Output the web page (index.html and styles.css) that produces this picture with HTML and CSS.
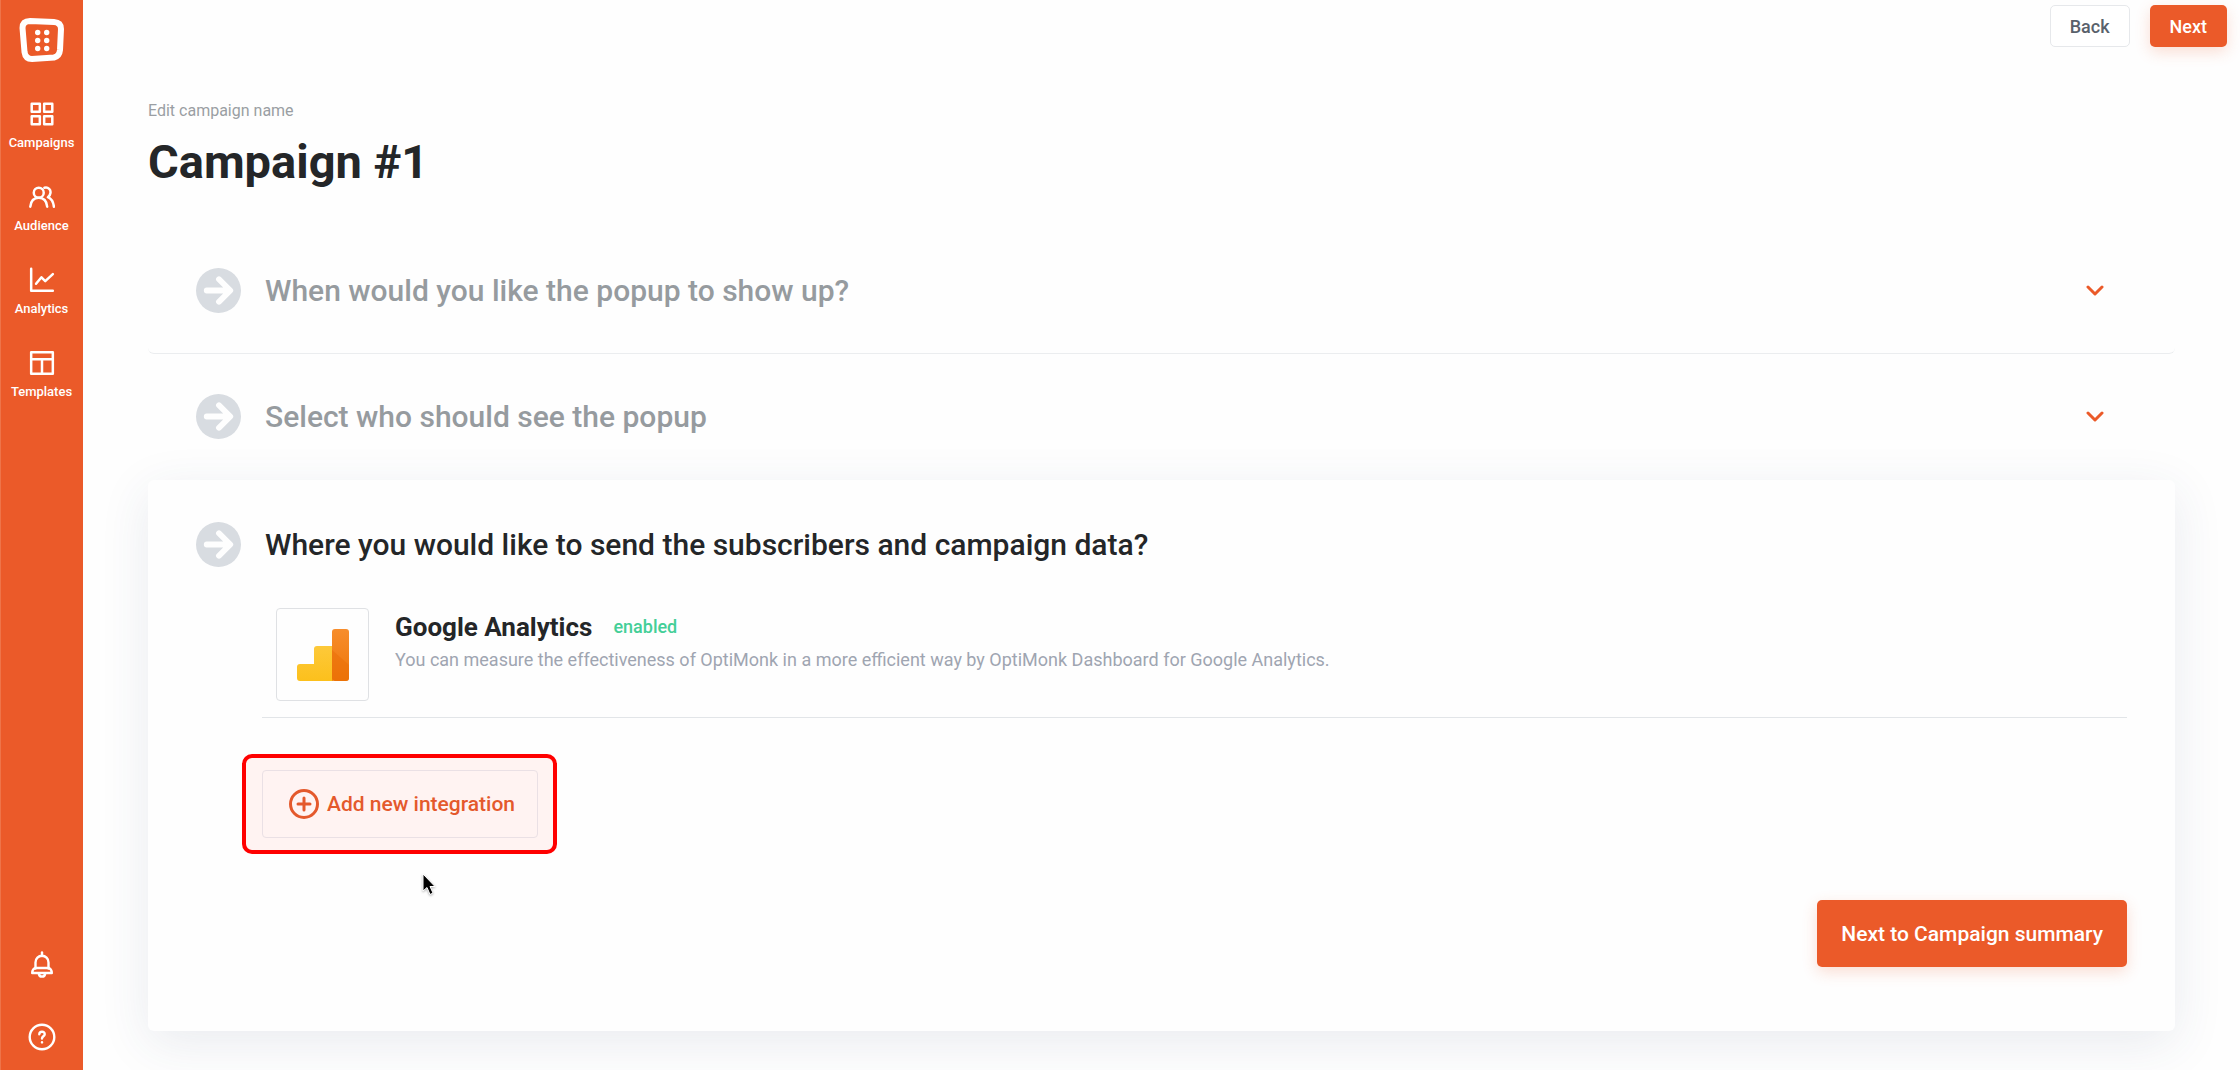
FILE: index.html
```html
<!DOCTYPE html>
<html lang="en">
<head>
    <meta charset="UTF-8">
    <meta name="viewport" content="width=device-width, initial-scale=1.0">
    <title>Campaign #1</title>
    <link rel="stylesheet" href="styles.css">
</head>
<body>

    <!-- Sidebar -->
    <nav class="sidebar">
        <a href="#" class="logo" aria-label="Home">
            <svg width="46" height="46" viewBox="0 0 46 46">
                <path d="M11 4 L35 5 Q42 5.500 42 12 L41 33 Q40.500 39 35 40.500 L13 42 Q6.500 42 5.500 35 L3.500 11 Q3.500 4 11 4Z" fill="none" stroke="#fff" stroke-width="6"/>
                <g fill="#fff">
                    <circle cx="18.700" cy="15.500" r="2.700"/>
                    <circle cx="27.700" cy="15.500" r="2.700"/>
                    <circle cx="18.700" cy="23.500" r="2.700"/>
                    <circle cx="27.700" cy="23.500" r="2.700"/>
                    <circle cx="18.700" cy="31.500" r="2.700"/>
                    <circle cx="27.700" cy="31.500" r="2.700"/>
                </g>
            </svg>
        </a>

        <a href="#" class="nav-item">
            <svg class="nav-icon" viewBox="0 0 24 24">
                <rect x="2.500" y="2.500" width="7.500" height="7.500"/>
                <rect x="14" y="2.500" width="7.500" height="7.500"/>
                <rect x="2.500" y="14" width="7.500" height="7.500"/>
                <rect x="14" y="14" width="7.500" height="7.500"/>
            </svg>
            <span>Campaigns</span>
        </a>
        <a href="#" class="nav-item">
            <svg class="nav-icon" viewBox="0 0 24 24">
                <circle cx="9" cy="8" r="4.600"/>
                <path d="M1.200 21 C1.700 16 4.500 12.800 9 12.800 S16.300 16 16.800 21"/>
                <path d="M14.200 3.500 C18 2.600 20.300 5.300 19.800 8.300 C19.600 10 18.700 11.300 17.500 12.200 C20.500 13.500 22.500 17 23 21"/>
            </svg>
            <span>Audience</span>
        </a>
        <a href="#" class="nav-item">
            <svg class="nav-icon" viewBox="0 0 24 24">
                <path d="M2 1.500 V22 H22"/>
                <path d="M6.500 15.500 L11.500 9.500 L15 13 L22 6.500"/>
            </svg>
            <span>Analytics</span>
        </a>
        <a href="#" class="nav-item">
            <svg class="nav-icon" viewBox="0 0 24 24">
                <rect x="2" y="2" width="20" height="20"/>
                <path d="M2 8.500 H22 M12 8.500 V22"/>
            </svg>
            <span>Templates</span>
        </a>

        <div class="sidebar-bottom">
            <button class="icon-btn" aria-label="Notifications">
                <svg width="28" height="28" viewBox="0 0 28 28" class="stroke-white">
                    <path d="M7.500 17.500 V11.500 C7.500 7.500 10.500 4.800 14 4.800 S20.500 7.500 20.500 11.500 V17.500"/>
                    <path d="M14 1.500 V5"/>
                    <path d="M7 17 H21 Q23.800 18.500 23.800 22 H4.200 Q4.200 18.500 7 17Z"/>
                    <path d="M10.800 22.500 C11.300 26.700 16.700 26.700 17.200 22.500"/>
                </svg>
            </button>
            <button class="icon-btn" aria-label="Help">
                <svg width="28" height="28" viewBox="0 0 28 28" class="stroke-white">
                    <circle cx="14" cy="14" r="12.300"/>
                    <path d="M11.300 11.200 C11.500 7.700 17 8 16.700 11.300 C16.500 13.300 14 13.300 14 15.500"/>
                    <path d="M14 19.200 V19.400"/>
                </svg>
            </button>
        </div>
    </nav>

    <div class="page">
        <header class="topbar">
            <button class="btn btn-light">Back</button>
            <button class="btn btn-primary">Next</button>
        </header>

        <main class="content">
            <label class="name-label" for="campaignName">Edit campaign name</label>
            <input class="name-input" type="text" id="campaignName" value="Campaign #1">

            <!-- Collapsed steps -->
            <section class="step">
                <h2>
                    <button class="step-header" aria-expanded="false">
                        <svg class="step-arrow" viewBox="0 0 46 46">
                            <circle cx="23" cy="23" r="23"/>
                            <path d="M11 23 H34 M23.500 11.500 L35 23 L23.500 34.500"/>
                        </svg>
                        <span class="step-title">When would you like the popup to show up?</span>
                        <svg class="chevron" viewBox="0 0 20 12"><path d="M3 2 L10 9 L17 2"/></svg>
                    </button>
                </h2>
            </section>
            <section class="step">
                <h2>
                    <button class="step-header" aria-expanded="false">
                        <svg class="step-arrow" viewBox="0 0 46 46">
                            <circle cx="23" cy="23" r="23"/>
                            <path d="M11 23 H34 M23.500 11.500 L35 23 L23.500 34.500"/>
                        </svg>
                        <span class="step-title">Select who should see the popup</span>
                        <svg class="chevron" viewBox="0 0 20 12"><path d="M3 2 L10 9 L17 2"/></svg>
                    </button>
                </h2>
            </section>

            <!-- Open step -->
            <section class="step step-open">
                <h2>
                    <button class="step-header" aria-expanded="true">
                        <svg class="step-arrow" viewBox="0 0 46 46">
                            <circle cx="23" cy="23" r="23"/>
                            <path d="M11 23 H34 M23.500 11.500 L35 23 L23.500 34.500"/>
                        </svg>
                        <span class="step-title">Where you would like to send the subscribers and campaign data?</span>
                    </button>
                </h2>

                <div class="step-body">
                    <div class="integration">
                        <div class="integration-logo">
                            <svg width="54" height="54" viewBox="0 0 54 54">
                                <defs>
                                    <linearGradient id="bars" x1="0" y1="0" x2="0" y2="1">
                                        <stop offset="0" stop-color="#fdc93a"/>
                                        <stop offset="1" stop-color="#fcc01c"/>
                                    </linearGradient>
                                    <linearGradient id="tall" x1="0" y1="0" x2="0" y2="1">
                                        <stop offset="0" stop-color="#f78d2c"/>
                                        <stop offset="1" stop-color="#ee7608"/>
                                    </linearGradient>
                                </defs>
                                <path d="M4 36 H18 V21 Q18 18 21 18 H37 V53 H4 Q1 53 1 50 V39 Q1 36 4 36Z" fill="url(#bars)"/>
                                <rect x="36" y="1" width="17" height="52" rx="3" fill="url(#tall)"/>
                                <path d="M36 22 L53 37 V50 Q53 53 50 53 H36Z" fill="#ea6d05" fill-opacity="0.500"/>
                            </svg>
                        </div>
                        <div class="integration-info">
                            <div class="integration-name">
                                <h3>Google Analytics</h3>
                                <span class="status">enabled</span>
                            </div>
                            <p>You can measure the effectiveness of OptiMonk in a more efficient way by OptiMonk Dashboard for Google Analytics.</p>
                        </div>
                    </div>

                    <div class="highlight">
                        <button class="btn-add">
                            <svg width="30" height="30" viewBox="0 0 30 30">
                                <circle cx="15" cy="15" r="13.500"/>
                                <path d="M15 9 V21 M9 15 H21"/>
                            </svg>
                            Add new integration
                        </button>
                        <svg class="cursor" width="16" height="24" viewBox="0 0 16 24">
                            <path d="M1 1 V18 L5 14.500 L8 21.500 L11 20 L8 13.500 H13Z"/>
                        </svg>
                    </div>
                </div>

                <div class="step-footer">
                    <button class="btn btn-primary btn-large">Next to Campaign summary</button>
                </div>
            </section>
        </main>
    </div>

</body>
</html>
```

FILE: styles.css
```css
* {
    box-sizing: border-box;
}

body {
    margin: 0;
    display: flex;
    min-height: 100vh;
    font-family: Roboto, Arial, sans-serif;
    color: #242628;
    background-color: #fefefe;
}

button, input {
    font-family: inherit;
}

button {
    cursor: pointer;
}

h2, h3, p {
    margin: 0;
}

/* Sidebar */
.sidebar {
    width: 83px;
    flex-shrink: 0;
    display: flex;
    flex-direction: column;
    align-items: center;
    padding: 17px 1px 19px 0;
    background-color: #eb5a29;
    border-left: 1px solid #ee7449;
}

.logo {
    height: 46px;
    margin-bottom: 38px;
}

.nav-item {
    display: flex;
    flex-direction: column;
    align-items: center;
    gap: 8px;
    height: 83px;
    color: white;
    font-size: 13px;
    font-weight: 500;
    line-height: 16px;
    text-decoration: none;
}

.nav-icon {
    width: 26px;
    height: 26px;
    fill: none;
    stroke: white;
    stroke-width: 2.3;
    stroke-linecap: round;
    stroke-linejoin: round;
}

.sidebar-bottom {
    display: flex;
    flex-direction: column;
    gap: 44px;
    margin-top: auto;
}

.icon-btn {
    height: 28px;
    padding: 0;
    border: none;
    background: none;
}

.stroke-white {
    fill: none;
    stroke: white;
    stroke-width: 2.4;
    stroke-linecap: round;
    stroke-linejoin: round;
}

/* Page */
.page {
    flex: 1;
    min-width: 0;
}

.topbar {
    display: flex;
    justify-content: flex-end;
    gap: 20px;
    padding: 5px 13px 0;
}

.btn {
    height: 42px;
    padding: 0 19px;
    border: 1px solid transparent;
    border-radius: 5px;
    font-size: 18px;
    font-weight: 500;
}

.btn-light {
    color: #59616b;
    background-color: white;
    border-color: #e6e8eb;
}

.btn-primary {
    color: white;
    background-color: #eb5a29;
    box-shadow: 0 5px 15px rgba(235, 90, 41, 0.2);
}

.btn-large {
    height: 67px;
    padding: 0 23px;
    font-size: 21px;
}

.content {
    padding: 54px 65px 38px;
}

.name-label {
    display: block;
    font-size: 16px;
    line-height: 20px;
    color: #9a9ea3;
}

.name-input {
    display: block;
    width: 100%;
    height: 60px;
    margin: 10px 0 37px;
    padding: 0;
    border: none;
    outline: none;
    background: none;
    font-size: 47px;
    font-weight: 700;
    color: #242628;
}

/* Steps */
.step {
    border-bottom: 1px solid #ebedef;
    border-radius: 6px;
}

.step:nth-of-type(2) {
    border-bottom-color: transparent;
}

.step-header {
    display: flex;
    align-items: center;
    width: 100%;
    height: 125px;
    padding: 0 70px 0 48px;
    border: none;
    background: none;
    text-align: left;
    font-size: 30px;
    font-weight: 500;
    color: #969b9f;
}

.step-arrow {
    width: 45px;
    height: 45px;
    margin-right: 24px;
    fill: #d8dce1;
}

.step-arrow path {
    fill: none;
    stroke: #fefefe;
    stroke-width: 6;
    stroke-linecap: round;
    stroke-linejoin: round;
}

.chevron {
    width: 20px;
    height: 12px;
    margin-left: auto;
    fill: none;
    stroke: #eb5a29;
    stroke-width: 3;
    stroke-linecap: round;
    stroke-linejoin: round;
}

.step-open {
    border: none;
    padding-bottom: 64px;
    background-color: #fefefe;
    box-shadow: 0 12px 50px rgba(50, 70, 110, 0.1);
}

.step-open .step-header {
    height: 128px;
    color: #242628;
}

.step-body {
    padding: 0 48px 0 114px;
}

.integration {
    display: flex;
    gap: 26px;
    padding: 0 14px 16px;
    border-bottom: 1px solid #e2e5e8;
}

.integration-logo {
    display: flex;
    align-items: center;
    justify-content: center;
    width: 93px;
    height: 93px;
    flex-shrink: 0;
    border: 1px solid #dfe1e4;
    border-radius: 4px;
}

.integration-name {
    display: flex;
    align-items: center;
    gap: 21px;
    margin-top: 3px;
    line-height: 32px;
}

.integration-name h3 {
    font-size: 26px;
    font-weight: 700;
}

.status {
    font-size: 18px;
    font-weight: 500;
    color: #44cf98;
}

.integration-info p {
    margin-top: 5px;
    font-size: 18px;
    line-height: 24px;
    color: #9fa5b1;
}

/* Add button with a red frame around it */
.highlight {
    position: relative;
    width: fit-content;
    margin: 36px 0 0 -20px;
    padding: 12px 15px 12px 16px;
    border: 4px solid #ff0000;
    border-radius: 10px;
    background-color: #fff3f2;
}

.btn-add {
    display: flex;
    align-items: center;
    gap: 8px;
    height: 68px;
    padding: 0 22px 0 26px;
    border: 1px solid #eae0e5;
    border-radius: 4px;
    background: none;
    font-size: 21px;
    font-weight: 500;
    color: #e4592c;
}

.btn-add svg {
    fill: none;
    stroke: #e4592c;
    stroke-width: 3;
    stroke-linecap: round;
}

.cursor {
    position: absolute;
    left: 176px;
    top: 115px;
    fill: black;
    stroke: white;
    stroke-width: 1;
    filter: drop-shadow(0 1px 1px rgba(0, 0, 0, 0.3));
}

.step-footer {
    display: flex;
    justify-content: flex-end;
    margin-top: 46px;
    padding-right: 48px;
}
```
